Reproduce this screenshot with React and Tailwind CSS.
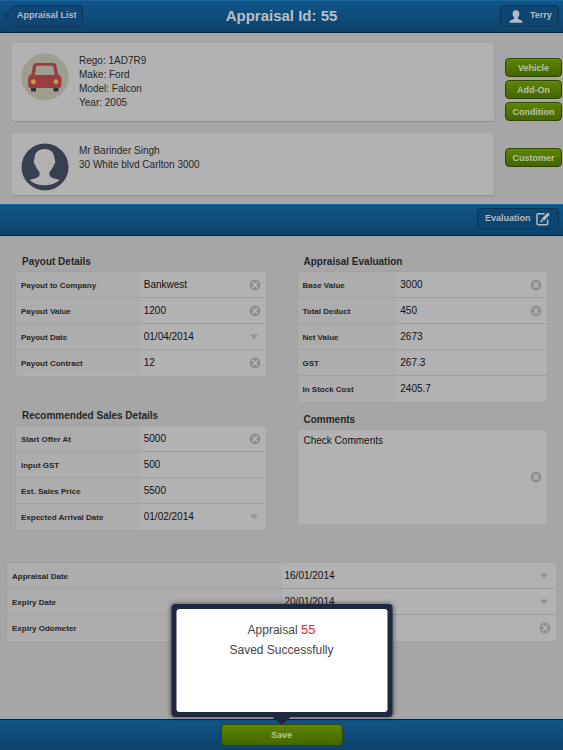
import React from "react";

const barButton =
  "flex h-[22px] items-center rounded-[4px] border border-[#0a3355] bg-linear-to-b from-[#0f4673] to-[#0d4570] text-[9px] font-bold text-[#b4bcc3] shadow-[0_1px_0_#14507f]";
const greenButton =
  "flex items-center justify-center rounded-[4px] border border-[#2f4600] bg-linear-to-b from-[#5d8600] to-[#446500] pt-[2px] text-[9px] font-bold text-[#b9c2a8] shadow-[inset_0_1px_0_#648d0c]";

function ClearIcon() {
  return (
    <svg viewBox="0 0 12 12" className="size-3" aria-hidden="true">
      <circle cx="6" cy="6" r="5.4" fill="#8e8e8e" />
      <path d="M3.6 3.2 8.4 8.8M8.4 3.2 3.6 8.8" stroke="#b5b5b5" strokeWidth="1.6" />
    </svg>
  );
}

function ClearButton({ label }) {
  return (
    <button type="button" aria-label={`Clear ${label}`} className="flex size-3 shrink-0 items-center">
      <ClearIcon />
    </button>
  );
}

function Field({ id, label, value, kind, split }) {
  const cell = "min-w-0 flex-1 appearance-none bg-transparent pt-px text-[10px] leading-4 text-[#111] outline-none";
  return (
    <div className="flex h-[26px] border-b border-[#a0a0a0] last:border-transparent">
      <label
        htmlFor={id}
        className={`flex shrink-0 items-center bg-[#adadad] pt-[3px] pl-[5px] text-[8px] font-bold text-[#262626] ${split}`}
      >
        {label}
      </label>
      <div className="flex min-w-0 flex-1 items-center pr-[5px] pl-[3px]">
        {kind === "select" ? (
          <>
            <select id={id} defaultValue={value} className={cell}>
              <option>{value}</option>
            </select>
            <svg viewBox="0 0 12 12" className="pointer-events-none size-3" aria-hidden="true">
              <path d="M1 3.500h8L5 8.500z" fill="#949494" />
            </svg>
          </>
        ) : (
          <input id={id} type="text" defaultValue={value} className={cell} />
        )}
        {kind === "clear" && <ClearButton label={label} />}
      </div>
    </div>
  );
}

function FieldList({ fields, split }) {
  return (
    <div className="overflow-hidden rounded-[3px] bg-[#b2b2b2] shadow-[0_0_0_1px_#a2a2a2]">
      {fields.map((f) => (
        <Field key={f.id} split={split} {...f} />
      ))}
    </div>
  );
}

function Heading({ children }) {
  return <h2 className="h-5 pl-[6px] text-[10px] leading-5 font-bold text-[#262626]">{children}</h2>;
}

const payout = [
  { id: "company", label: "Payout to Company", value: "Bankwest", kind: "clear" },
  { id: "pvalue", label: "Payout Value", value: "1200", kind: "clear" },
  { id: "pdate", label: "Payout Date", value: "01/04/2014", kind: "select" },
  { id: "contract", label: "Payout Contract", value: "12", kind: "clear" },
];
const sales = [
  { id: "offer", label: "Start Offer At", value: "5000", kind: "clear" },
  { id: "inputgst", label: "Input GST", value: "500" },
  { id: "price", label: "Est. Sales Price", value: "5500" },
  { id: "arrival", label: "Expected Arrival Date", value: "01/02/2014", kind: "select" },
];
const evaluation = [
  { id: "base", label: "Base Value", value: "3000", kind: "clear" },
  { id: "deduct", label: "Total Deduct", value: "450", kind: "clear" },
  { id: "net", label: "Net Value", value: "2673" },
  { id: "gst", label: "GST", value: "267.3" },
  { id: "stock", label: "In Stock Cost", value: "2405.7" },
];
const dates = [
  { id: "adate", label: "Appraisal Date", value: "16/01/2014", kind: "select" },
  { id: "edate", label: "Expiry Date", value: "20/01/2014", kind: "select" },
  { id: "odo", label: "Expiry Odometer", value: "", kind: "clear" },
];

function CarAvatar() {
  return (
    <svg viewBox="0 0 48 48" className="size-12 shrink-0" aria-hidden="true">
      <circle cx="24" cy="24" r="23.5" fill="#9d9e8d" />
      <rect x="10" y="33" width="5" height="5.500" rx="1" fill="#2b3143" />
      <rect x="32.500" y="33" width="5" height="5.500" rx="1" fill="#2b3143" />
      <path
        fillRule="evenodd"
        fill="#9a3d40"
        d="M15.500 10h16.500c2 0 3 .8 3.500 2.600L37.200 21.500c2.200.9 3.200 2.500 3.200 4.500v6c0 1.900-.9 2.900-2.700 2.900H9.800c-1.900 0-2.700-1-2.700-2.900v-6c0-2 1-3.600 3.200-4.500L12 12.600C12.500 10.800 13.500 10 15.500 10zM16.500 12.800c-.8 0-1.200.3-1.400 1.100L13.800 22h20l-1.500-8.100c-.2-.8-.6-1.100-1.400-1.100z"
      />
      <circle cx="12.300" cy="28.700" r="2.400" fill="#c99a50" />
      <circle cx="35" cy="28.700" r="2.400" fill="#c99a50" />
    </svg>
  );
}

function PersonAvatar() {
  return (
    <svg viewBox="0 0 48 48" className="size-12 shrink-0" aria-hidden="true">
      <circle cx="24" cy="24" r="23.500" fill="#373f51" />
      <path
        fill="#b2b2b2"
        d="M23.500 6C29.800 6 33.500 10 33.500 15.500 33.500 17 34.600 17.600 34.300 19.200 34 20.800 33 21.500 32.400 23 31.500 25.500 30.300 26.800 29 28.200 28 30 28 32 29.300 33.500 31.200 35.400 35 35.700 38.500 37 35 40.600 29.500 42.300 23.500 42.300S12 40.600 8.500 37C12 35.700 15.800 35.400 17.700 33.500 19 32 19 30 18 28.200 16.700 26.800 15.500 25.500 14.600 23 14 21.500 13 20.800 12.700 19.200 12.400 17.600 13.500 17 13.500 15.500 13.500 10 17.200 6 23.500 6z"
      />
    </svg>
  );
}

function InfoCard({ avatar, lines }) {
  return (
    <section className="flex min-w-0 flex-1 items-start gap-[10px] rounded-[3px] bg-[#b2b2b2] px-[9px] pt-[10px] shadow-[0_1px_1px_#8f8f8f]">
      {avatar}
      <div className="pt-px pb-[10px] text-[10px] leading-[14px] text-[#262626]">
        {lines.map((l) => (
          <p key={l}>{l}</p>
        ))}
      </div>
    </section>
  );
}

function SideButtons({ names }) {
  return (
    <div className="flex w-[57px] flex-col gap-[3px] pt-[15px]">
      {names.map((n) => (
        <button key={n} type="button" className={`${greenButton} h-[19px]`}>
          {n}
        </button>
      ))}
    </div>
  );
}

export default function App() {
  return (
    <div className="flex min-h-screen flex-col bg-[#a6a6a6] font-['Liberation_Sans',Arial,sans-serif]">
      <header className="grid h-[33px] grid-cols-[1fr_auto_1fr] items-start border-t border-b border-t-[#1b679c] border-b-[#05243c] bg-linear-to-b from-[#10568b] to-[#0d4269] px-1 pt-1">
        <button type="button" className="relative flex h-[22px] w-[79px] items-center pl-[13px] text-[9px] font-bold whitespace-nowrap text-[#b4bcc3]">
          <svg viewBox="0 0 79 22" className="absolute inset-0 size-full" aria-hidden="true">
            <path
              d="M11.500.5H75a3.500 3.500 0 0 1 3.500 3.500v14a3.500 3.500 0 0 1-3.500 3.500H11.500Q10 21.500 9 20L1.200 12.500Q0 11 1.200 9.500L9 2Q10 .5 11.500.5z"
              fill="#0f4673"
              stroke="#0a3355"
            />
          </svg>
          <span className="relative">Appraisal List</span>
        </button>
        <h1 className="text-[15px] leading-[22px] font-bold text-[#b9bfc5]">Appraisal Id: 55</h1>
        <button type="button" className={`${barButton} w-[59px] justify-self-end gap-[7px] pl-2`}>
          <svg viewBox="0 0 14 13" className="h-[13px] w-[14px]" aria-hidden="true">
            <path
              fill="#b4bcc3"
              d="M7 .3c2.200 0 3.400 1.400 3.400 3.400 0 1.600-.7 3-1.600 3.800v1.200c.8.900 4.800 1.200 4.800 4H.4c0-2.800 4-3.100 4.800-4V7.500C4.300 6.700 3.600 5.300 3.600 3.700 3.600 1.700 4.800.3 7 .3z"
            />
          </svg>
          Terry
        </button>
      </header>

      <div className="flex flex-col gap-3 pt-[10px] pr-px pb-[9px] pl-3">
        <div className="flex gap-[11px]">
          <InfoCard avatar={<CarAvatar />} lines={["Rego: 1AD7R9", "Make: Ford", "Model: Falcon", "Year: 2005"]} />
          <SideButtons names={["Vehicle", "Add-On", "Condition"]} />
        </div>
        <div className="flex min-h-[62px] gap-[11px]">
          <InfoCard avatar={<PersonAvatar />} lines={["Mr Barinder Singh", "30 White blvd Carlton 3000"]} />
          <SideButtons names={["Customer"]} />
        </div>
      </div>

      <div className="flex h-8 items-start justify-end border-t border-b border-t-[#1b679c] border-b-[#05243c] bg-linear-to-b from-[#10568b] to-[#0d4269] px-1 pt-[3px]">
        <button type="button" className={`${barButton} w-[82px] justify-between pr-2 pl-[7px]`}>
          Evaluation
          <svg viewBox="0 0 14 14" className="size-[14px]" fill="none" aria-hidden="true">
            <path d="M8.500 1.800H2.300Q1 1.800 1 3v8.500q0 1.300 1.300 1.300h8q1.300 0 1.300-1.300V7.500" stroke="#b4bcc3" strokeWidth="1.500" />
            <path d="M11.800.5 13.900 2.600 8 8.700 5.800 6.500zM5.300 7.100l2.100 2.100-3.200 1.200z" fill="#b4bcc3" />
          </svg>
        </button>
      </div>

      <main className="flex-1">
        <div className="grid grid-cols-2 gap-8 px-4 pt-4">
          <div className="flex flex-col gap-[30px]">
            <section>
              <Heading>Payout Details</Heading>
              <FieldList fields={payout} split="w-1/2" />
            </section>
            <section>
              <Heading>Recommended Sales Details</Heading>
              <FieldList fields={sales} split="w-1/2" />
            </section>
          </div>
          <div className="flex flex-col gap-2">
            <section>
              <Heading>Appraisal Evaluation</Heading>
              <FieldList fields={evaluation} split="w-2/5" />
            </section>
            <section>
              <Heading>
                <label htmlFor="comments">Comments</label>
              </Heading>
              <div className="flex h-[94px] items-center rounded-[3px] bg-[#b2b2b2] pr-[5px] shadow-[0_0_0_1px_#a2a2a2]">
                <textarea
                  id="comments"
                  defaultValue="Check Comments"
                  className="h-full min-w-0 flex-1 resize-none bg-transparent py-[3px] pl-[6px] text-[10px] leading-4 text-[#111] outline-none"
                />
                <ClearButton label="Comments" />
              </div>
            </section>
          </div>
        </div>
        <div className="px-[7px] pt-[33px]">
          <FieldList fields={dates} split="w-1/2" />
        </div>
      </main>

      <footer className="relative flex h-[31px] justify-center border-t border-[#05243c] bg-linear-to-b from-[#10568b] to-[#0d4269] pt-1">
        <button type="button" className={`${greenButton} h-[22px] w-[122px]`}>
          Save
        </button>
        <div
          role="dialog"
          aria-label="Appraisal saved"
          className="absolute bottom-[33px] left-1/2 h-[113px] w-[221px] -translate-x-1/2 rounded-[4px] bg-[#1f2840] p-[5px] shadow-[0_0_5px_rgba(0,0,0,0.6)]"
        >
          <div className="h-full rounded-[3px] bg-white pt-[11px] text-center text-[12px] leading-5 text-[#444]">
            <p>
              Appraisal <span className="text-[13px] text-[#f01820]">55</span>
            </p>
            <p>Saved Successfully</p>
          </div>
          <svg viewBox="0 0 18 8" className="absolute top-full left-1/2 h-2 w-[18px] -translate-x-1/2" aria-hidden="true">
            <path d="M0 0h18L9 8z" fill="#1f2840" />
          </svg>
        </div>
      </footer>
    </div>
  );
}
